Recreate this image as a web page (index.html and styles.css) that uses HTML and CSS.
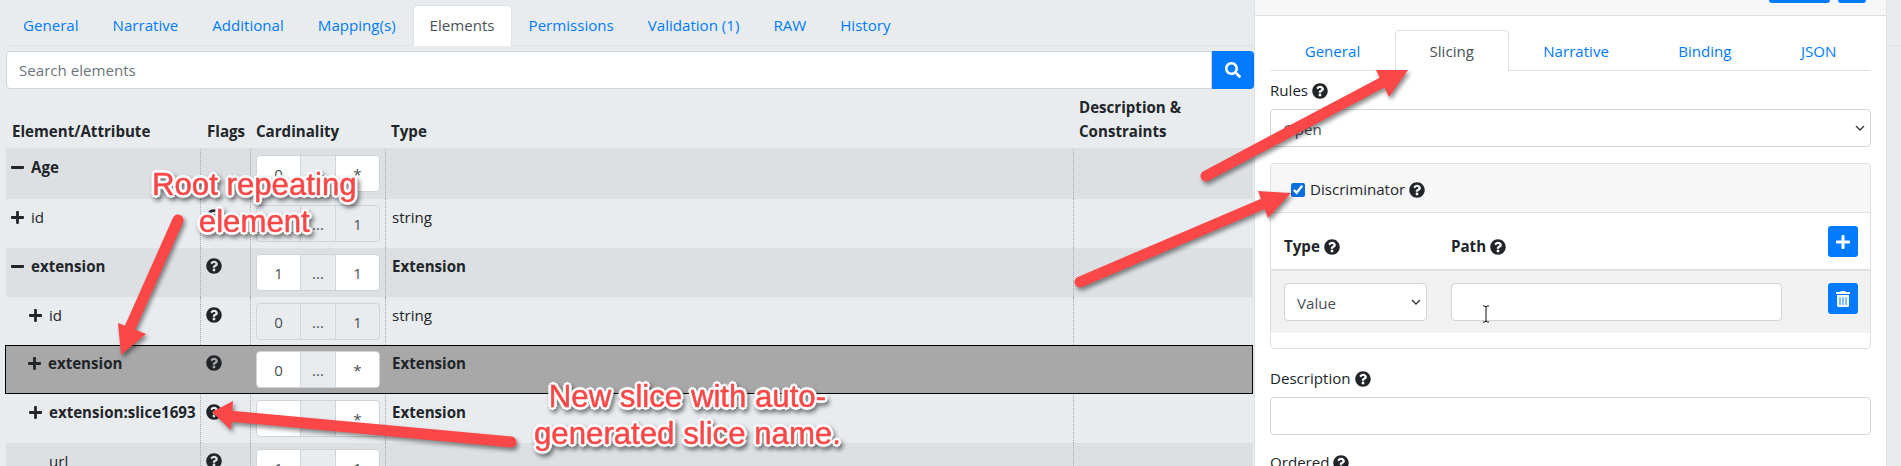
FILE: index.html
```html
<!DOCTYPE html>
<html lang="en">
<head>
	<meta charset="UTF-8">
	<title>Elements</title>
	<link rel="stylesheet" href="styles.css">
</head>
<body>
	<svg class="defs" width="0" height="0">
		<symbol id="help" viewBox="0 0 512 512"><path d="M504 256c0 136.997-111.043 248-248 248S8 392.997 8 256C8 119.083 119.043 8 256 8s248 111.083 248 248zM262.655 90c-54.497 0-89.255 22.957-116.549 63.758-3.536 5.286-2.353 12.415 2.715 16.258l34.699 26.31c5.205 3.947 12.621 3.008 16.665-2.122 17.864-22.658 30.113-35.797 57.303-35.797 20.429 0 45.698 13.148 45.698 32.958 0 14.976-12.363 22.667-32.534 33.976C247.128 238.528 216 254.941 216 296v4c0 6.627 5.373 12 12 12h56c6.627 0 12-5.373 12-12v-1.333c0-28.462 83.186-29.647 83.186-106.667 0-58.002-60.165-102-116.531-102zM256 338c-25.365 0-46 20.635-46 46 0 25.364 20.635 46 46 46s46-20.636 46-46c0-25.365-20.635-46-46-46z"/></symbol>
		<symbol id="plus" viewBox="0 0 448 512"><path d="M416 208H272V64c0-17.67-14.33-32-32-32h-32c-17.67 0-32 14.33-32 32v144H32c-17.67 0-32 14.33-32 32v32c0 17.67 14.33 32 32 32h144v144c0 17.67 14.33 32 32 32h32c17.67 0 32-14.33 32-32V304h144c17.67 0 32-14.33 32-32v-32c0-17.67-14.33-32-32-32z"/></symbol>
		<symbol id="minus" viewBox="0 0 448 512"><path d="M416 208H32c-17.67 0-32 14.33-32 32v32c0 17.67 14.33 32 32 32h384c17.67 0 32-14.33 32-32v-32c0-17.67-14.33-32-32-32z"/></symbol>
		<symbol id="search" viewBox="0 0 512 512"><path d="M505 442.7L405.3 343c-4.5-4.5-10.6-7-17-7H372c27.6-35.3 44-79.7 44-128C416 93.1 322.9 0 208 0S0 93.1 0 208s93.1 208 208 208c48.3 0 92.7-16.4 128-44v16.3c0 6.4 2.5 12.5 7 17l99.7 99.7c9.4 9.4 24.6 9.4 33.9 0l28.3-28.3c9.4-9.4 9.4-24.6.1-34zM208 336c-70.7 0-128-57.2-128-128 0-70.7 57.2-128 128-128 70.7 0 128 57.2 128 128 0 70.7-57.2 128-128 128z"/></symbol>
		<symbol id="trash" viewBox="0 0 448 512"><path d="M32 464a48 48 0 0 0 48 48h288a48 48 0 0 0 48-48V128H32zm272-256a16 16 0 0 1 32 0v224a16 16 0 0 1-32 0zm-96 0a16 16 0 0 1 32 0v224a16 16 0 0 1-32 0zm-96 0a16 16 0 0 1 32 0v224a16 16 0 0 1-32 0zM432 32H312l-9-19a24 24 0 0 0-22-13H167a24 24 0 0 0-22 13l-9 19H16A16 16 0 0 0 0 48v32a16 16 0 0 0 16 16h416a16 16 0 0 0 16-16V48a16 16 0 0 0-16-16z"/></symbol>
	</svg>

	<div class="page">
		<div class="main">
			<div class="tabs">
				<a class="tab">General</a>
				<a class="tab">Narrative</a>
				<a class="tab">Additional</a>
				<a class="tab">Mapping(s)</a>
				<a class="tab active">Elements</a>
				<a class="tab">Permissions</a>
				<a class="tab">Validation (1)</a>
				<a class="tab">RAW</a>
				<a class="tab">History</a>
			</div>
			<div class="search">
				<input class="search-input" type="text" placeholder="Search elements">
				<button class="search-btn"><svg class="ico-search"><use href="#search"/></svg></button>
			</div>
			<div class="thead">
				<div class="th">Element/Attribute</div>
				<div class="th">Flags</div>
				<div class="th">Cardinality</div>
				<div class="th">Type</div>
				<div class="th">Description &amp; Constraints</div>
			</div>

			<div class="row alt first">
				<div class="cell name bold"><svg class="ico-tree"><use href="#minus"/></svg>Age</div>
				<div class="cell"></div>
				<div class="cell"><div class="card-box"><span>0</span><i>...</i><span>*</span></div></div>
				<div class="cell"></div>
				<div class="cell"></div>
			</div>
			<div class="row">
				<div class="cell name"><svg class="ico-tree"><use href="#plus"/></svg>id</div>
				<div class="cell"><svg class="ico-help"><use href="#help"/></svg></div>
				<div class="cell"><div class="card-box off"><span>0</span><i>...</i><span>1</span></div></div>
				<div class="cell type">string</div>
				<div class="cell"></div>
			</div>
			<div class="row alt">
				<div class="cell name bold"><svg class="ico-tree"><use href="#minus"/></svg>extension</div>
				<div class="cell"><svg class="ico-help"><use href="#help"/></svg></div>
				<div class="cell"><div class="card-box"><span>1</span><i>...</i><span>1</span></div></div>
				<div class="cell type bold">Extension</div>
				<div class="cell"></div>
			</div>
			<div class="row">
				<div class="cell name depth"><svg class="ico-tree"><use href="#plus"/></svg>id</div>
				<div class="cell"><svg class="ico-help"><use href="#help"/></svg></div>
				<div class="cell"><div class="card-box off"><span>0</span><i>...</i><span>1</span></div></div>
				<div class="cell type">string</div>
				<div class="cell"></div>
			</div>
			<div class="row selected">
				<div class="cell name depth bold"><svg class="ico-tree"><use href="#plus"/></svg>extension</div>
				<div class="cell"><svg class="ico-help"><use href="#help"/></svg></div>
				<div class="cell"><div class="card-box"><span>0</span><i>...</i><span>*</span></div></div>
				<div class="cell type bold">Extension</div>
				<div class="cell"></div>
			</div>
			<div class="row">
				<div class="cell name depth bold"><svg class="ico-tree"><use href="#plus"/></svg>extension:slice1693</div>
				<div class="cell"><svg class="ico-help"><use href="#help"/></svg></div>
				<div class="cell"><div class="card-box"><span>0</span><i>...</i><span>*</span></div></div>
				<div class="cell type bold">Extension</div>
				<div class="cell"></div>
			</div>
			<div class="row alt">
				<div class="cell name leaf">url</div>
				<div class="cell"><svg class="ico-help"><use href="#help"/></svg></div>
				<div class="cell"><div class="card-box"><span>1</span><i>...</i><span>1</span></div></div>
				<div class="cell"></div>
				<div class="cell"></div>
			</div>
		</div>

		<div class="side">
			<div class="side-top">
				<span class="top-btn wide"></span>
				<span class="top-btn"></span>
			</div>
			<div class="side-body">
				<div class="side-tabs">
					<a class="stab">General</a>
					<a class="stab active">Slicing</a>
					<a class="stab">Narrative</a>
					<a class="stab">Binding</a>
					<a class="stab">JSON</a>
				</div>
				<div class="group">
					<label class="lbl">Rules <svg class="ico-help"><use href="#help"/></svg></label>
					<select class="ctl sel"><option>Open</option></select>
				</div>
				<div class="disc">
					<div class="disc-head">
						<input class="chk" type="checkbox" checked>
						<label class="lbl">Discriminator <svg class="ico-help"><use href="#help"/></svg></label>
					</div>
					<div class="disc-grid disc-labels">
						<b class="lbl">Type <svg class="ico-help"><use href="#help"/></svg></b>
						<b class="lbl">Path <svg class="ico-help"><use href="#help"/></svg></b>
						<button class="sq-btn"><svg class="ico-btn"><use href="#plus"/></svg></button>
					</div>
					<div class="disc-grid disc-row">
						<select class="ctl sel"><option>Value</option></select>
						<input class="ctl" type="text">
						<button class="sq-btn"><svg class="ico-btn"><use href="#trash"/></svg></button>
					</div>
				</div>
				<div class="group">
					<label class="lbl">Description <svg class="ico-help"><use href="#help"/></svg></label>
					<input class="ctl" type="text">
				</div>
				<div class="group">
					<label class="lbl">Ordered <svg class="ico-help"><use href="#help"/></svg></label>
				</div>
			</div>
		</div>
		<div class="strip"></div>
	</div>

	<!-- annotations drawn on top of the screenshot -->
	<svg class="arrows" width="1901" height="466">
		<g class="arrow">
			<line x1="178" y1="220" x2="129" y2="330"/>
			<polygon points="121,355 118,323 146,334"/>
		</g>
		<g class="arrow">
			<line x1="511" y1="442" x2="228" y2="416"/>
			<polygon points="212,412 233,401 231,430"/>
		</g>
		<g class="arrow">
			<line x1="1206" y1="176" x2="1385" y2="81"/>
			<polygon points="1408,70 1376,70 1389,97"/>
		</g>
		<g class="arrow">
			<line x1="1080" y1="282" x2="1265" y2="203"/>
			<polygon points="1291,193 1258,191 1268,218"/>
		</g>
	</svg>
	<svg class="beam" width="10" height="18" viewBox="0 0 10 18"><path d="M2 1h2l1 1 1-1h2M5 2v14M2 17h2l1-1 1 1h2"/></svg>
	<div class="note note-root">Root repeating<br>element</div>
	<div class="note note-slice">New slice with auto-<br>generated slice name.</div>
</body>
</html>
```

FILE: styles.css
```css
*{
	margin: 0;
	padding: 0;
	box-sizing: border-box;
}
html,body{
	overflow: hidden;
	width: 100%;
	height: 100%;
	background: #e9ecef;
	font-family: "Open Sans", "Liberation Sans", sans-serif;
	font-size: 15.1px;
	line-height: 24px;
	color: #212529;
}
.defs{
	position: absolute;
}
.page{
	display: flex;
	height: 466px;
	overflow: hidden;
}

/* left part */
.main{
	flex: 0 0 1254px;
	padding-left: 6px;
}
.tabs{
	display: flex;
	height: 46px;
	padding-top: 5px;
	border-bottom: 1px solid #dee2e6;
}
.tab{
	padding: 7px 16px;
	border: 1px solid transparent;
	border-radius: 4px 4px 0 0;
	color: #007bff;
	height: 41px;
}
.tab.active{
	background: #fff;
	color: #495057;
	border-color: #dee2e6 #dee2e6 #fff;
}
.search{
	display: flex;
	margin-top: 5px;
	height: 38px;
}
.search-input{
	flex: 1;
	min-width: 0;
	padding: 0 12px;
	border: 1px solid #ced4da;
	border-radius: 4px 0 0 4px;
	font: inherit;
	color: #495057;
}
.search-input::placeholder{
	color: #6c757d;
}
.search-btn{
	width: 42px;
	border: 0;
	border-radius: 0 4px 4px 0;
	background: #007bff;
	display: flex;
	align-items: center;
	justify-content: center;
}
.ico-search{
	width: 16px;
	height: 16px;
	fill: #fff;
}

/* table */
.thead,
.row{
	display: grid;
	grid-template-columns: 194px 50px 135px 688px 180px;
	width: 1247px;
}
.thead{
	height: 59px;
	align-items: end;
	padding-bottom: 5px;
}
.th{
	font-weight: 700;
	padding-left: 6px;
}
.th:nth-child(2){
	padding-left: 7px;
}
.th:nth-child(5){
	width: 160px;
}
.row{
	height: 48.8px;
}
.row.first{
	height: 51px;
}
.row.alt{
	background: #dce0e3;
}
.row.selected{
	background: #a8a8a8;
	outline: 1px solid #000;
	outline-offset: -1px;
	margin-left: -1px;
	width: 1248px;
	grid-template-columns: 195px 50px 135px 688px 180px;
	position: relative;
}
.cell{
	padding: 6px 0 0 7px;
	border-left: 1px dotted #a5a9ad;
	overflow: hidden;
	min-width: 0;
}
.cell:first-child{
	border-left: 0;
}
.row.first .cell{
	border-top: 1px solid transparent;
	background-clip: padding-box;
}
.cell:nth-child(3){
	padding: 6px 0 0 5px;
}
.cell.type{
	padding-left: 6px;
}
.name{
	padding-left: 5px;
	overflow: visible;
	white-space: nowrap;
}
.name.depth{
	padding-left: 23px;
}
.name.leaf{
	padding-left: 43px;
}
.bold{
	font-weight: 700;
}
.ico-tree{
	width: 13px;
	height: 15px;
	margin-right: 7px;
	vertical-align: -2px;
	fill: #212529;
}
.ico-help{
	width: 16px;
	height: 16px;
	vertical-align: -3px;
	fill: #212529;
}
.cell .ico-help{
	margin: 4px 0 0 -2px;
	display: block;
}
.card-box{
	display: flex;
	width: 124px;
	height: 37px;
	border: 1px solid #ced4da;
	border-radius: 4px;
	background: #fff;
	overflow: hidden;
	color: #495057;
	text-align: center;
	line-height: 36px;
}
.card-box span{
	flex: 1;
}
.card-box i{
	flex: 0 0 36px;
	font-style: normal;
	background: #e9ecef;
	border-left: 1px solid #ced4da;
	border-right: 1px solid #ced4da;
}
.card-box.off{
	background: #e9ecef;
}

/* right part */
.side{
	flex: 0 0 633px;
	height: 466px;
	background: #fff;
	border-left: 1px solid #dee2e6;
	border-right: 1px solid #dee2e6;
}
.side-top{
	display: flex;
	justify-content: flex-end;
	gap: 8px;
	height: 16px;
	padding-right: 20px;
	background: #f7f7f7;
	border-bottom: 1px solid #dfdfdf;
}
.top-btn{
	width: 28px;
	height: 3px;
	background: #007bff;
	border-radius: 0 0 4px 4px;
}
.top-btn.wide{
	width: 61px;
}
.side-body{
	padding: 14px 15px 0;
}
.side-tabs{
	display: flex;
	height: 41px;
	margin-bottom: 8px;
	border-bottom: 1px solid #dee2e6;
}
.stab{
	flex: 1 1 auto;
	height: 41px;
	padding: 8px 16px;
	text-align: center;
	color: #007bff;
	border: 1px solid transparent;
	border-radius: 4px 4px 0 0;
}
.stab.active{
	color: #495057;
	background: #fff;
	border-color: #dee2e6 #dee2e6 #fff;
}
.group{
	margin-bottom: 16px;
}
.group .lbl{
	display: block;
	margin: -1px 0 7px;
}
.ctl{
	display: block;
	width: 100%;
	height: 38px;
	padding: 0 12px;
	border: 1px solid #ced4da;
	border-radius: 4px;
	background: #fff;
	font: inherit;
	color: #495057;
}
.sel{
	appearance: none;
	padding-top: 2px;
	background: #fff url("data:image/svg+xml,%3Csvg xmlns='http://www.w3.org/2000/svg' width='10' height='6'%3E%3Cpath d='M1 1l4 4 4-4' fill='none' stroke='%23343a40' stroke-width='1.4'/%3E%3C/svg%3E") no-repeat right 5px center;
}
.disc{
	margin-bottom: 18px;
	border: 1px solid #dfdfdf;
	border-radius: 4px;
	padding-bottom: 15px;
}
.disc-head{
	display: flex;
	align-items: center;
	gap: 5px;
	height: 49px;
	padding: 2px 0 0 20px;
	background: #f7f7f7;
	border-bottom: 1px solid #dfdfdf;
	border-radius: 4px 4px 0 0;
}
.chk{
	width: 14px;
	height: 14px;
	margin-top: 2px;
	accent-color: #0a6ee0;
}
.disc-grid{
	display: grid;
	grid-template-columns: 143px 331px 1fr;
	column-gap: 24px;
	padding: 13px 12px 0 13px;
}
.disc-labels{
	height: 56px;
}
.disc-labels .lbl{
	padding-top: 8px;
}
.disc-row{
	height: 64px;
	padding-top: 12px;
	background: #f1f1f1;
	border-top: 2px solid #dee2e6;
}
.sq-btn{
	width: 30px;
	height: 31px;
	justify-self: end;
	border: 0;
	border-radius: 3px;
	background: #007bff;
	display: flex;
	align-items: center;
	justify-content: center;
}
.ico-btn{
	width: 14px;
	height: 16px;
	fill: #fff;
}
.strip{
	flex: 1;
	height: 46px;
	border-bottom: 1px solid #dee2e6;
}

/* annotations */
.arrows{
	position: absolute;
	top: 0;
	left: 0;
	filter: drop-shadow(2px 3px 2px rgba(0,0,0,.45));
}
.arrow line{
	stroke: #fb4747;
	stroke-width: 11;
	stroke-linecap: round;
}
.arrow polygon{
	fill: #fb4747;
}
.beam{
	position: absolute;
	left: 1481px;
	top: 305px;
	fill: none;
	stroke: #111;
	stroke-width: 1;
}
.note{
	position: absolute;
	color: #fb4747;
	font-family: "Liberation Sans", Arial, sans-serif;
	font-size: 31.2px;
	line-height: 37px;
	text-align: center;
	white-space: nowrap;
	-webkit-text-stroke: .5px #fb4747;
	text-shadow: 2px 0 #fff, -2px 0 #fff, 0 2px #fff, 0 -2px #fff, 2px 2px #fff, -2px 2px #fff, 2px -2px #fff, -2px -2px #fff, 3px 0 1px #fff, -3px 0 1px #fff, 0 3px 1px #fff, 0 -3px 1px #fff;
	filter: drop-shadow(2px 3px 2px rgba(0,0,0,.5));
}
.note-root{
	left: 152px;
	top: 166px;
}
.note-slice{
	left: 534px;
	top: 378px;
}
```
